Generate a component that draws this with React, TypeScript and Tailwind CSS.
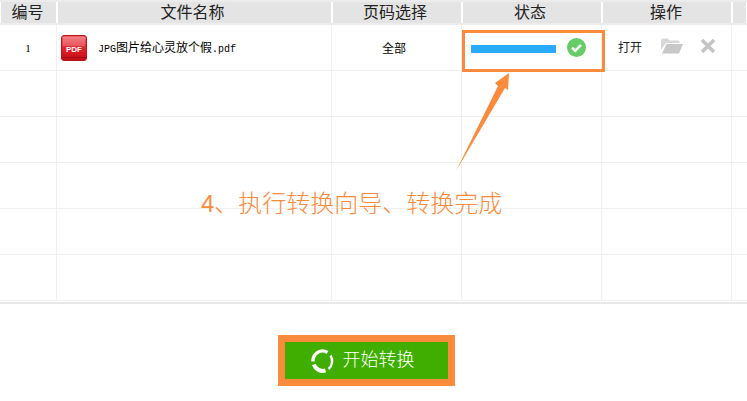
const CJK = "font-['Liberation_Sans','Noto_Sans_CJK_SC',sans-serif]";

const columns = [
  { label: "编号", width: "w-[57px]", shift: "pr-[2px]" },
  { label: "文件名称", width: "w-[275px]", shift: "pr-[4px]" },
  { label: "页码选择", width: "w-[130px]", shift: "pr-[4px]" },
  { label: "状态", width: "w-[140px]", shift: "pr-[4px]" },
  { label: "操作", width: "w-[130px]", shift: "pr-[2px]" },
  { label: "", width: "flex-1", shift: "" },
];

function PdfIcon() {
  return (
    <svg width="26" height="26" viewBox="0 0 26 26">
      <defs>
        <linearGradient id="pdfBg" x1="0" y1="0" x2="0" y2="1">
          <stop offset="0" stopColor="#f0686c" />
          <stop offset="0.55" stopColor="#e0202a" />
          <stop offset="1" stopColor="#c00d14" />
        </linearGradient>
      </defs>
      <rect x="0.5" y="0.5" width="25" height="25" rx="2.5" fill="url(#pdfBg)" stroke="#b8141a" />
      <rect x="2" y="2" width="22" height="9" fill="#fff" opacity="0.18" />
      <rect x="1" y="22" width="24" height="1" fill="#a30c12" />
      <text x="13" y="17" textAnchor="middle" fontSize="8" fontWeight="700" fill="#fff" fontFamily="Liberation Sans, sans-serif">
        PDF
      </text>
    </svg>
  );
}

function CheckBadge() {
  return (
    <svg width="19" height="19" viewBox="0 0 19 19">
      <circle cx="9.5" cy="9.5" r="9.5" fill="#66cc66" />
      <path d="M5 9.8l3.2 3L14 6.8" fill="none" stroke="#fff" strokeWidth="2.6" />
    </svg>
  );
}

function FolderIcon() {
  return (
    <svg width="22" height="16" viewBox="0 0 22 16">
      <path d="M0 2.5Q0 0.5 2 0.5H6.5L8.5 2.5H17Q18.5 2.5 18.5 4V5H5L0 12Z" fill="#d8d8d8" />
      <path d="M5.5 6H22L18 15.5H1Z" fill="#c8c8c8" />
    </svg>
  );
}

function CloseIcon() {
  return (
    <svg width="16" height="16" viewBox="0 0 16 16">
      <path d="M2 2L14 14M14 2L2 14" stroke="#c4c4c4" strokeWidth="3.6" />
    </svg>
  );
}

function SpinnerIcon() {
  return (
    <svg width="23" height="24" viewBox="0 0 23 24" fill="none" stroke="#fff">
      <path d="M2 12.5A9.5 10 0 0 1 16.5 3.5" strokeWidth="3.4" />
      <path d="M19.5 6.5A9.5 10 0 0 1 17.5 20" strokeWidth="2.4" />
      <path d="M14.5 21.4A9.5 10 0 0 1 2.8 15.5" strokeWidth="4" />
    </svg>
  );
}

function Row({ children }: { children?: React.ReactNode[] }) {
  return (
    <div className="flex h-[46px] border-b border-[#f0f0f0]">
      {columns.map((col, i) => (
        <div
          key={i}
          className={`${col.width} flex h-full items-center border-r border-[#f0f0f0] last:border-r-0`}
        >
          {children?.[i]}
        </div>
      ))}
    </div>
  );
}

export default function App() {
  return (
    <div className={`relative h-[401px] w-[747px] overflow-hidden bg-white ${CJK}`}>
      {/* table */}
      <div className="flex h-[25px] border-y-2 border-[#ececec] bg-[#e4e4e4]">
        {columns.map((col, i) => (
          <div
            key={i}
            className={`${col.width} ${col.shift} flex items-center justify-center border-x border-white text-[16px] leading-none text-[#222]`}
          >
            {col.label}
          </div>
        ))}
      </div>
      <Row>
        {[
          <span key="n" className="w-full pt-[2px] text-center font-['Liberation_Serif','Noto_Sans_CJK_SC',serif] text-[11px] text-black">
            1
          </span>,
          <div key="f" className="flex items-center pl-[4px]">
            <PdfIcon />
            <span className="ml-[11px] pt-[1px] text-[12px] text-black">
              <span className="font-['Liberation_Mono',monospace] text-[10px]">JPG</span>
              图片给心灵放个假
              <span className="font-['Liberation_Mono',monospace] text-[10px]">.pdf</span>
            </span>
          </div>,
          <span key="p" className="w-full pr-[5px] pt-[2px] text-center text-[12px] text-black">
            全部
          </span>,
          <div key="s" className="flex items-center pl-[9px]">
            <div className="mt-[3px] h-[8px] w-[85px] bg-[#2aaaff]" />
            <div className="ml-[11px]">
              <CheckBadge />
            </div>
          </div>,
          <div key="o" className="flex items-center pl-[16px]">
            <span className="mr-[19px] text-[12px] text-[#222]">打开</span>
            <div className="mb-[4px] flex items-center">
              <FolderIcon />
              <div className="ml-[17px]">
                <CloseIcon />
              </div>
            </div>
          </div>,
        ]}
      </Row>
      <Row />
      <Row />
      <Row />
      <Row />
      <Row />
      <div className="h-[3px] border-b-2 border-[#e8e8e8]" />

      {/* start button */}
      <div className="flex justify-center pr-[14px] pt-[31px]">
        <button
          type="button"
          className="flex h-[51px] w-[177px] items-center justify-center gap-[9px] border-[7px] border-[#fa8b3c] bg-[#3fae00] pr-[8px] text-[18px] font-light text-white"
        >
          <SpinnerIcon />
          开始转换
        </button>
      </div>

      {/* annotation overlay */}
      <div className="absolute left-[462px] top-[30px] h-[42px] w-[143px] border-[3px] border-[#fa8b3c]" />
      <svg className="absolute left-[450px] top-[70px]" width="70" height="105" viewBox="0 0 70 105">
        <path d="M6 101L48 16L45 13L59 3L58 20L55 18Z" fill="#fa8b3c" />
      </svg>
      <div className="absolute left-[201px] top-[189px] text-[24px] font-light leading-[30px] text-[#fa8b3c]">
        4、执行转换向导、转换完成
      </div>
    </div>
  );
}
